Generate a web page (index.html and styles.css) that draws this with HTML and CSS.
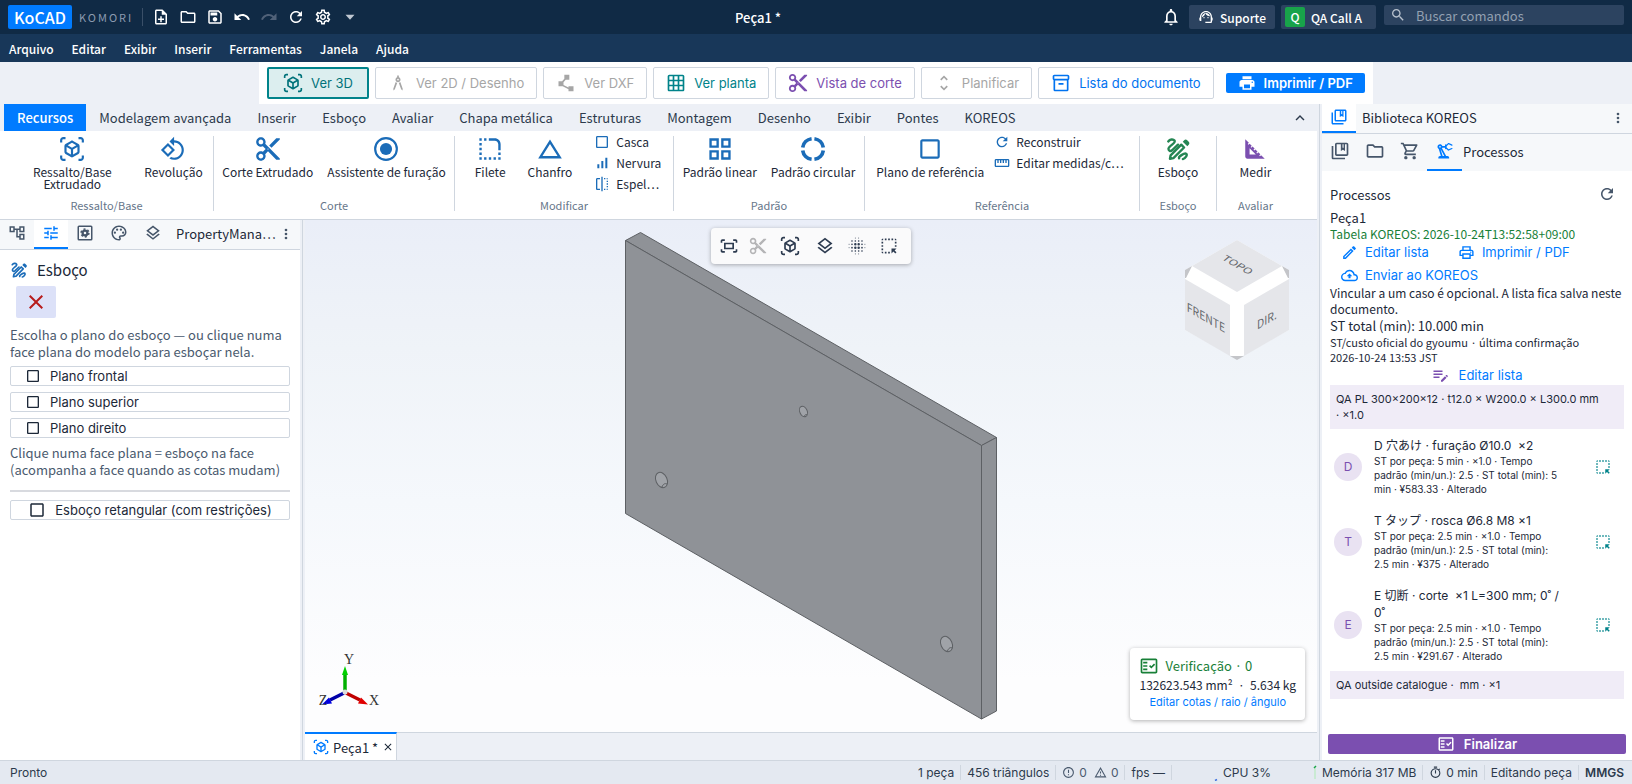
FILE: index.html
```html
<!DOCTYPE html>
<html lang="pt-BR">
<head>
<meta charset="utf-8">
<meta name="viewport" content="width=device-width, initial-scale=1">
<title>KoCAD</title>
<link rel="stylesheet" href="styles.css">
</head>
<body>
<svg class="sprite" aria-hidden="true">
  <symbol id="note-add" viewBox="0 0 24 24"><path d="M13 11h-2v3H8v2h3v3h2v-3h3v-2h-3zm1-9H6c-1.1 0-2 .9-2 2v16c0 1.1.89 2 1.99 2H18c1.1 0 2-.9 2-2V8l-6-6zm4 18H6V4h7v5h5v11z"/></symbol>
  <symbol id="folder" viewBox="0 0 24 24"><path d="M9.17 6l2 2H20v10H4V6h5.17M10 4H4c-1.1 0-1.99.9-1.99 2L2 18c0 1.1.9 2 2 2h16c1.1 0 2-.9 2-2V8c0-1.1-.9-2-2-2h-8l-2-2z"/></symbol>
  <symbol id="save" viewBox="0 0 24 24"><path d="M17 3H5c-1.11 0-2 .9-2 2v14c0 1.1.89 2 2 2h14c1.1 0 2-.9 2-2V7l-4-4zm2 16H5V5h11.17L19 7.83V19zm-7-7c-1.66 0-3 1.34-3 3s1.34 3 3 3 3-1.34 3-3-1.34-3-3-3zM6 6h9v4H6z"/></symbol>
  <symbol id="undo" viewBox="0 0 24 24"><path d="M12.5 8c-2.65 0-5.05.99-6.9 2.6L2 7v9h9l-3.62-3.62c1.39-1.16 3.16-1.88 5.12-1.88 3.54 0 6.55 2.31 7.6 5.5l2.37-.78C21.08 11.03 17.15 8 12.5 8z"/></symbol>
  <symbol id="redo" viewBox="0 0 24 24"><path d="M18.4 10.6C16.55 8.99 14.15 8 11.5 8c-4.65 0-8.58 3.03-9.96 7.22L3.9 16c1.05-3.19 4.05-5.5 7.6-5.5 1.95 0 3.73.72 5.12 1.88L13 16h9V7l-3.6 3.6z"/></symbol>
  <symbol id="refresh" viewBox="0 0 24 24"><path d="M17.65 6.35C16.2 4.9 14.21 4 12 4c-4.42 0-7.99 3.58-7.99 8s3.57 8 7.99 8c3.73 0 6.84-2.55 7.73-6h-2.08c-.82 2.33-3.04 4-5.65 4-3.31 0-6-2.69-6-6s2.69-6 6-6c1.66 0 3.14.69 4.22 1.78L13 11h7V4l-2.35 2.35z"/></symbol>
  <symbol id="settings" viewBox="0 0 24 24"><path d="M19.43 12.98c.04-.32.07-.64.07-.98 0-.34-.03-.66-.07-.98l2.11-1.65c.19-.15.24-.42.12-.64l-2-3.46c-.09-.16-.26-.25-.44-.25-.06 0-.12.01-.17.03l-2.49 1c-.52-.4-1.08-.73-1.69-.98l-.38-2.65C14.46 2.18 14.25 2 14 2h-4c-.25 0-.46.18-.49.42l-.38 2.65c-.61.25-1.17.59-1.69.98l-2.49-1c-.06-.02-.12-.03-.18-.03-.17 0-.34.09-.43.25l-2 3.46c-.13.22-.07.49.12.64l2.11 1.65c-.04.32-.07.65-.07.98 0 .33.03.66.07.98l-2.11 1.65c-.19.15-.24.42-.12.64l2 3.46c.09.16.26.25.44.25.06 0 .12-.01.17-.03l2.49-1c.52.4 1.08.73 1.69.98l.38 2.65c.03.24.24.42.49.42h4c.25 0 .46-.18.49-.42l.38-2.65c.61-.25 1.17-.59 1.69-.98l2.49 1c.06.02.12.03.18.03.17 0 .34-.09.43-.25l2-3.46c.12-.22.07-.49-.12-.64l-2.11-1.65zm-1.98-1.71c.04.31.05.52.05.73 0 .21-.02.43-.05.73l-.14 1.13.89.7 1.08.84-.7 1.21-1.27-.51-1.04-.42-.9.68c-.43.32-.84.56-1.25.73l-1.06.43-.16 1.13-.2 1.35h-1.4l-.19-1.35-.16-1.13-1.06-.43c-.43-.18-.83-.41-1.23-.71l-.91-.7-1.06.43-1.27.51-.7-1.21 1.08-.84.89-.7-.14-1.13c-.03-.31-.05-.54-.05-.74s.02-.43.05-.73l.14-1.13-.89-.7-1.08-.84.7-1.21 1.27.51 1.04.42.9-.68c.43-.32.84-.56 1.25-.73l1.06-.43.16-1.13.2-1.35h1.39l.19 1.35.16 1.13 1.06.43c.43.18.83.41 1.23.71l.91.7 1.06-.43 1.27-.51.7 1.21-1.07.85-.89.7.14 1.13zM12 8c-2.21 0-4 1.79-4 4s1.79 4 4 4 4-1.79 4-4-1.79-4-4-4zm0 6c-1.1 0-2-.9-2-2s.9-2 2-2 2 .9 2 2-.9 2-2 2z"/></symbol>
  <symbol id="caret" viewBox="0 0 24 24"><path d="M6 9l6 6.500 6-6.500z"/></symbol>
  <symbol id="bell" viewBox="0 0 24 24"><path d="M12 22c1.100 0 2-.9 2-2h-4c0 1.100.9 2 2 2zm6-6v-5c0-3.070-1.630-5.640-4.500-6.320V4c0-.83-.67-1.500-1.500-1.500s-1.500.67-1.500 1.500v.68C7.640 5.360 6 7.920 6 11v5l-2 2v1h16v-1l-2-2zm-2 1H8v-6c0-2.480 1.510-4.500 4-4.500s4 2.020 4 4.500v6z"/></symbol>
  <symbol id="support" viewBox="0 0 24 24"><path d="M21 12.22C21 6.73 16.74 3 12 3c-4.690 0-9 3.650-9 9.280-.6.34-1 .98-1 1.720v2c0 1.100.9 2 2 2h1v-6.100c0-3.870 3.130-7 7-7s7 3.130 7 7V19h-8v2h8c1.100 0 2-.9 2-2v-1.220c.59-.31 1-.92 1-1.640v-2.300c0-.7-.41-1.310-1-1.620z"/><circle cx="9" cy="13" r="1"/><circle cx="15" cy="13" r="1"/><path d="M18 11.030C17.520 8.180 15.040 6 12.050 6c-3.030 0-6.290 2.510-6.030 6.450 2.470-1.010 4.330-3.210 4.860-5.890 1.310 2.630 4 4.440 7.120 4.470z"/></symbol>
  <symbol id="search" viewBox="0 0 24 24"><path d="M15.5 14h-.79l-.28-.27C15.410 12.590 16 11.110 16 9.500 16 5.910 13.090 3 9.500 3S3 5.910 3 9.500 5.910 16 9.500 16c1.610 0 3.090-.59 4.230-1.570l.27.28v.79l5 4.990L20.490 19l-4.990-5zm-6 0C7.010 14 5 11.990 5 9.500S7.010 5 9.500 5 14 7.010 14 9.500 11.990 14 9.500 14z"/></symbol>
  <symbol id="cube" viewBox="0 0 24 24"><path d="M3 4c0-.55.45-1 1-1h2V1H4C2.340 1 1 2.340 1 4v2h2V4zM3 20v-2H1v2c0 1.660 1.340 3 3 3h2v-2H4c-.55 0-1-.45-1-1zM20 1h-2v2h2c.55 0 1 .45 1 1v2h2V4c0-1.660-1.340-3-3-3zM21 20c0 .55-.45 1-1 1h-2v2h2c1.660 0 3-1.340 3-3v-2h-2v2zM19 14.870V9.130c0-.72-.38-1.380-1-1.730l-5-2.880c-.31-.18-.65-.27-1-.27s-.69.09-1 .27L6 7.390c-.62.36-1 1.020-1 1.740v5.740c0 .72.38 1.380 1 1.730l5 2.880c.31.18.65.27 1 .27s.69-.09 1-.27l5-2.880c.62-.35 1-1.010 1-1.730zm-8 2.300-4-2.300v-4.630l4 2.330v4.600zm1-6.330L8.040 8.530 12 6.250l3.960 2.280L12 10.840zm5 4.030-4 2.300v-4.600l4-2.330v4.630z"/></symbol>
  <symbol id="compass" viewBox="0 0 24 24"><path d="M6.360 18.780 6.610 21l1.620-1.540 2.770-7.600c-.68-.17-1.280-.51-1.770-.98l-2.870 7.900zM14.770 10.880c-.49.47-1.100.81-1.770.98l2.770 7.600L17.390 21l.25-2.220-2.870-7.900zM15 8c0-1.300-.84-2.400-2-2.820V3h-2v2.180C9.840 5.600 9 6.700 9 8c0 1.660 1.340 3 3 3s3-1.340 3-3zm-3 1c-.55 0-1-.45-1-1s.45-1 1-1 1 .45 1 1-.45 1-1 1z"/></symbol>
  <symbol id="polyline" viewBox="0 0 24 24"><path d="M15 16v1.260l-6-3v-3.170L11.700 8H16V2h-6v4.900L7.300 10H3v6h5l7 3.500V22h6v-6h-6z"/></symbol>
  <symbol id="grid" viewBox="0 0 24 24"><path d="M20 2H4c-1.100 0-2 .9-2 2v16c0 1.100.9 2 2 2h16c1.100 0 2-.9 2-2V4c0-1.100-.9-2-2-2zM8 20H4v-4h4v4zm0-6H4v-4h4v4zm0-6H4V4h4v4zm6 12h-4v-4h4v4zm0-6h-4v-4h4v4zm0-6h-4V4h4v4zm6 12h-4v-4h4v4zm0-6h-4v-4h4v4zm0-6h-4V4h4v4z"/></symbol>
  <symbol id="cut" viewBox="1 1 22 22"><path d="M9.640 7.640c.23-.5.36-1.050.36-1.640 0-2.210-1.790-4-4-4S2 3.790 2 6s1.790 4 4 4c.59 0 1.140-.13 1.640-.36L10 12l-2.360 2.360C7.140 14.130 6.590 14 6 14c-2.210 0-4 1.790-4 4s1.790 4 4 4 4-1.790 4-4c0-.59-.13-1.140-.36-1.640L12 14l7 7h3v-1L9.640 7.640zM6 8c-1.100 0-2-.89-2-2s.9-2 2-2 2 .89 2 2-.9 2-2 2zm0 12c-1.100 0-2-.89-2-2s.9-2 2-2 2 .89 2 2-.9 2-2 2zm6-7.500c-.28 0-.5-.22-.5-.5s.22-.5.5-.5.5.22.5.5-.22.5-.5.5zM19 3l-6 6 2 2 7-7V3z"/></symbol>
  <symbol id="unfold" viewBox="0 0 24 24"><path d="M12 5.830 15.170 9l1.410-1.410L12 3 7.410 7.590 8.830 9 12 5.830zm0 12.340L8.830 15l-1.410 1.410L12 21l4.590-4.590L15.170 15 12 18.170z"/></symbol>
  <symbol id="archive" viewBox="0 0 24 24"><path d="M20 2H4c-1 0-2 .9-2 2v3.010c0 .72.43 1.340 1 1.690V20c0 1.100 1.100 2 2 2h14c.9 0 2-.9 2-2V8.700c.57-.35 1-.97 1-1.690V4c0-1.100-1-2-2-2zm-1 18H5V9h14v11zm1-13H4V4h16v3zM9 12h6v2H9z"/></symbol>
  <symbol id="print-fill" viewBox="0 0 24 24"><path d="M19 8H5c-1.660 0-3 1.340-3 3v6h4v4h12v-4h4v-6c0-1.660-1.340-3-3-3zm-3 11H8v-5h8v5zm3-7c-.55 0-1-.45-1-1s.45-1 1-1 1 .45 1 1-.45 1-1 1zm-1-9H6v4h12V3z"/></symbol>
  <symbol id="print" viewBox="0 0 24 24"><path d="M19 8h-1V3H6v5H5c-1.660 0-3 1.340-3 3v6h4v4h12v-4h4v-6c0-1.660-1.340-3-3-3zM8 5h8v3H8V5zm8 12v2H8v-4h8v2zm2-2v-2H6v2H4v-4c0-.55.45-1 1-1h14c.55 0 1 .45 1 1v4h-2z"/><circle cx="18" cy="11.5" r="1"/></symbol>
  <symbol id="revolve" viewBox="0 0 24 24"><path d="M7.340 6.410.86 12.900l6.490 6.480 6.490-6.480-6.500-6.490zM3.690 12.900l3.660-3.660L11 12.900l-3.660 3.660-3.650-3.660zm15.670-6.260C17.610 4.880 15.300 4 13 4V.76L8.760 5 13 9.240V6c1.790 0 3.580.68 4.950 2.050 2.730 2.730 2.730 7.170 0 9.900C16.580 19.320 14.790 20 13 20c-.97 0-1.940-.21-2.840-.61l-1.490 1.490C10.020 21.620 11.510 22 13 22c2.300 0 4.610-.88 6.360-2.640 3.520-3.510 3.520-9.210 0-12.720z"/></symbol>
  <symbol id="target" viewBox="0 0 24 24"><circle cx="12" cy="12" r="10" fill="none" stroke="currentColor" stroke-width="2"/><circle cx="12" cy="12" r="5.600"/></symbol>
  <symbol id="fillet" viewBox="1 1 22 22"><path d="M19 19h2v2h-2v-2zm0-2h2v-2h-2v2zM3 13h2v-2H3v2zm0 4h2v-2H3v2zm0-8h2V7H3v2zm0-4h2V3H3v2zm4 0h2V3H7v2zm8 16h2v-2h-2v2zm-4 0h2v-2h-2v2zm-4 0h2v-2H7v2zm-4 0h2v-2H3v2zM21 8c0-2.760-2.240-5-5-5h-5v2h5c1.650 0 3 1.350 3 3v5h2V8z"/></symbol>
  <symbol id="triangle" viewBox="1 1 22 22"><path d="M12 7.770 18.390 18H5.610L12 7.770M12 4 2 20h20L12 4z"/></symbol>
  <symbol id="square" viewBox="0 0 24 24"><path d="M19 3H5c-1.100 0-2 .9-2 2v14c0 1.100.9 2 2 2h14c1.100 0 2-.9 2-2V5c0-1.100-.9-2-2-2zm0 16H5V5h14v14z"/></symbol>
  <symbol id="bars" viewBox="0 0 24 24"><path d="M17 4h3v16h-3zM5 14h3v6H5zm6-5h3v11h-3z"/></symbol>
  <symbol id="mirror" viewBox="0 0 24 24"><path d="M15 21h2v-2h-2v2zm4-12h2V7h-2v2zM3 5v14c0 1.100.9 2 2 2h4v-2H5V5h4V3H5c-1.100 0-2 .9-2 2zm16-2v2h2c0-1.100-.9-2-2-2zm-8 20h2V1h-2v22zm8-6h2v-2h-2v2zM15 5h2V3h-2v2zm4 8h2v-2h-2v2zm0 8c1.100 0 2-.9 2-2h-2v2z"/></symbol>
  <symbol id="quad" viewBox="1 1 22 22"><path d="M3 3v8h8V3H3zm6 6H5V5h4v4zm-6 4v8h8v-8H3zm6 6H5v-4h4v4zm4-16v8h8V3h-8zm6 6h-4V5h4v4zm-6 4v8h8v-8h-8zm6 6h-4v-4h4v4z"/></symbol>
  <symbol id="ring" viewBox="0 0 24 24"><g fill="none" stroke="currentColor" stroke-width="3.400"><path d="M13.300 2.500A9.600 9.600 0 0 1 21.500 10.700M21.500 13.300A9.600 9.600 0 0 1 13.300 21.500M10.700 21.500A9.600 9.600 0 0 1 2.500 13.300M2.500 10.700A9.600 9.600 0 0 1 10.700 2.500"/></g></symbol>
  <symbol id="ruler" viewBox="0 0 24 24"><path d="M21 6H3c-1.100 0-2 .9-2 2v8c0 1.100.9 2 2 2h18c1.100 0 2-.9 2-2V8c0-1.100-.9-2-2-2zm0 10H3V8h2v4h2V8h2v4h2V8h2v4h2V8h2v4h2V8h2v8z"/></symbol>
  <symbol id="sketch" viewBox="0 0 24 24"><g fill="none" stroke="currentColor" stroke-width="2.200" stroke-linecap="round" stroke-linejoin="round"><path d="M3 5C4.500 3 7.500 2.600 8.800 4.200C10.600 6.600 3 9.200 3.200 12C3.300 13.600 5 14.400 6.500 13.200L12 8"/><path d="M5.200 17.800 15 8 17.600 10.600 7.800 20.400 4.600 21z"/><path d="M13 20.600C12 19 17.800 15.800 19.200 16.200C21.500 17 18.800 20.800 16.500 21.300"/></g><path d="M16.400 5.200l1.300-1.300c.8-.8 2-.8 2.800 0l1.400 1.400c.8.8.8 2 0 2.800l-1.300 1.300z"/></symbol>
  <symbol id="set-square" viewBox="0 0 24 24"><path d="M17.660 17.660l-1.060 1.060-.71-.71 1.060-1.060-1.940-1.940-1.060 1.060-.71-.71 1.060-1.060-1.940-1.940-1.060 1.060-.71-.71 1.060-1.060L9.700 9.700l-1.060 1.060-.71-.71 1.060-1.060-1.940-1.940-1.060 1.060-.71-.71 1.060-1.060L3 3v16c0 1.100.9 2 2 2h16l-3.340-3.340zM7 17v-5.760L12.760 17H7z"/></symbol>
  <symbol id="library" viewBox="0 0 24 24"><path d="M4 6H2v14c0 1.100.9 2 2 2h14v-2H4V6z"/><path d="M20 2H8c-1.100 0-2 .9-2 2v12c0 1.100.9 2 2 2h12c1.100 0 2-.9 2-2V4c0-1.100-.9-2-2-2zm0 14H8V4h5v8l2.500-1.500L18 12V4h2v12zM15 4h1.300v4.400l-.8-.5-.5.4z" fill-rule="evenodd"/></symbol>
  <symbol id="cart" viewBox="0 0 24 24"><path d="M15.550 13c.75 0 1.410-.41 1.750-1.030l3.580-6.490c.37-.66-.11-1.480-.87-1.480H5.210l-.94-2H1v2h2l3.600 7.590-1.350 2.440C4.520 15.370 5.480 17 7 17h12v-2H7l1.100-2h7.450zM6.160 6h12.150l-2.760 5H8.530L6.160 6zM7 18c-1.100 0-1.990.9-1.990 2S5.900 22 7 22s2-.9 2-2-.9-2-2-2zm10 0c-1.100 0-1.990.9-1.990 2s.89 2 1.990 2 2-.9 2-2-.9-2-2-2z"/></symbol>
  <symbol id="robot" viewBox="0 0 24 24"><path d="M19.930 8.350l-3.600 1.680L14 7.700V6.300l2.330-2.330 3.600 1.680c.38.18.82.01 1-.36.18-.38.01-.82-.36-1l-3.920-1.830c-.38-.18-.83-.1-1.130.2L13.780 4.400c-.18-.24-.46-.4-.78-.4-.55 0-1 .45-1 1v1H8.820C8.400 4.840 7.300 4 6 4 4.340 4 3 5.340 3 7c0 1.100.6 2.050 1.480 2.580L7.080 18H6c-1.100 0-2 .9-2 2v1h13v-1c0-1.100-.9-2-2-2h-1.620L8.410 8.770c.17-.24.31-.49.41-.77H12v1c0 .55.45 1 1 1 .32 0 .6-.16.78-.4l1.740 1.740c.3.3.75.38 1.130.2l3.920-1.830c.38-.18.54-.62.36-1-.18-.37-.62-.54-1-.36zM6 8c-.55 0-1-.45-1-1s.45-1 1-1 1 .45 1 1-.45 1-1 1zm5.110 10H9.170l-2.460-8h.1l4.300 8z"/></symbol>
  <symbol id="tree" viewBox="0 0 24 24"><path d="M22 11V3h-7v3H9V3H2v8h7V8h2v10h4v3h7v-8h-7v3h-2V8h2v3h7zM7 9H4V5h3v4zm10 6h3v4h-3v-4zm0-10h3v4h-3V5z"/></symbol>
  <symbol id="tune" viewBox="0 0 24 24"><path d="M3 17v2h6v-2H3zM3 5v2h10V5H3zm10 16v-2h8v-2h-8v-2h-2v6h2zM7 9v2H3v2h4v2h2V9H7zm14 4v-2H11v2h10zm-6-4h2V7h4V5h-4V3h-2v6z"/></symbol>
  <symbol id="config" viewBox="0 0 24 24"><rect x="3" y="3" width="18" height="18" rx="1" fill="none" stroke="currentColor" stroke-width="2"/><circle cx="12" cy="12" r="3.200" fill="none" stroke="currentColor" stroke-width="3"/><circle cx="12" cy="12" r="5.200" fill="none" stroke="currentColor" stroke-width="2" stroke-dasharray="2.700 2.745"/></symbol>
  <symbol id="palette" viewBox="0 0 24 24"><path d="M12 22C6.490 22 2 17.510 2 12S6.490 2 12 2s10 4.040 10 9c0 3.310-2.690 6-6 6h-1.770c-.28 0-.5.22-.5.5 0 .12.05.23.13.33.41.47.64 1.060.64 1.670 0 1.380-1.120 2.500-2.500 2.500zm0-18c-4.410 0-8 3.590-8 8s3.590 8 8 8c.28 0 .5-.22.5-.5 0-.16-.08-.28-.14-.35-.41-.46-.63-1.050-.63-1.650 0-1.380 1.120-2.500 2.500-2.500H16c2.210 0 4-1.790 4-4 0-3.860-3.590-7-8-7z"/><circle cx="6.500" cy="11.500" r="1.500"/><circle cx="9.500" cy="7.500" r="1.500"/><circle cx="14.500" cy="7.500" r="1.500"/><circle cx="17.500" cy="11.500" r="1.500"/></symbol>
  <symbol id="layers" viewBox="0 0 24 24"><path d="M11.990 18.540l-7.370-5.730L3 14.070l9 7 9-7-1.630-1.270zM12 16l7.360-5.730L21 9l-9-7-9 7 1.630 1.270L12 16zm0-11.470L17.740 9 12 13.470 6.260 9 12 4.530z"/></symbol>
  <symbol id="more" viewBox="0 0 24 24"><circle cx="12" cy="6" r="2"/><circle cx="12" cy="12" r="2"/><circle cx="12" cy="18" r="2"/></symbol>
  <symbol id="up" viewBox="0 0 24 24"><path d="M12 8l-6 6 1.410 1.410L12 10.830l4.590 4.580L18 14z"/></symbol>
  <symbol id="close" viewBox="0 0 24 24"><path d="M19 6.410L17.590 5 12 10.590 6.410 5 5 6.410 10.590 12 5 17.590 6.410 19 12 13.410 17.590 19 19 17.590 13.410 12z"/></symbol>
  <symbol id="edit" viewBox="0 0 24 24"><path d="M14.060 9.020l.92.92L5.920 19H5v-.92l9.060-9.060M17.660 3c-.25 0-.51.1-.7.29l-1.830 1.830 3.750 3.750 1.830-1.830c.39-.39.39-1.020 0-1.410l-2.340-2.340c-.2-.2-.45-.29-.71-.29zm-3.600 3.190L3 17.250V21h3.750L17.810 9.940l-3.750-3.750z"/></symbol>
  <symbol id="cloud-up" viewBox="0 0 24 24"><path d="M19.350 10.040C18.670 6.590 15.640 4 12 4 9.110 4 6.600 5.640 5.350 8.040 2.340 8.360 0 10.910 0 14c0 3.310 2.690 6 6 6h13c2.760 0 5-2.240 5-5 0-2.640-2.050-4.780-4.650-4.960zM19 18H6c-2.210 0-4-1.790-4-4 0-2.050 1.530-3.760 3.560-3.970l1.070-.11.5-.95C8.080 7.140 9.940 6 12 6c2.620 0 4.880 1.860 5.390 4.430l.3 1.500 1.530.11c1.560.1 2.780 1.410 2.780 2.960 0 1.650-1.350 3-3 3zM8 13h2.550v3h2.900v-3H16l-4-4z"/></symbol>
  <symbol id="edit-note" viewBox="0 0 24 24"><path d="M2 10h12v2H2v-2zm0-2h12V6H2v2zm0 8h8v-2H2v2zm16.010-3.130.71-.71c.39-.39 1.020-.39 1.410 0l.71.71c.39.39.39 1.020 0 1.410l-.71.71-2.120-2.120zm-.71.71-5.300 5.300V21h2.120l5.300-5.300-2.120-2.120z"/></symbol>
  <symbol id="fact-check" viewBox="0 0 24 24"><path d="M20 3H4c-1.100 0-2 .9-2 2v14c0 1.100.9 2 2 2h16c1.100 0 2-.9 2-2V5c0-1.100-.9-2-2-2zm0 16H4V5h16v14z"/><path d="M19.410 10.420 17.990 9l-3.170 3.170-1.410-1.420L12 12.160 14.820 15zM5 7h5v2H5zm0 4h5v2H5zm0 4h5v2H5z"/></symbol>
  <symbol id="pick" viewBox="0 0 24 24"><path d="M17 5h-2V3h2v2zm-2 10v6l2.290-2.290L19.590 21 21 19.590l-2.290-2.290L21 15h-6zm4-6h2V7h-2v2zm0 4h2v-2h-2v2zm-8 8h2v-2h-2v2zM7 5h2V3H7v2zM3 17h2v-2H3v2zm2 4v-2H3c0 1.100.9 2 2 2zM19 3v2h2c0-1.100-.9-2-2-2zm-8 2h2V3h-2v2zM3 9h2V7H3v2zm4 12h2v-2H7v2zm-4-8h2v-2H3v2zm0-8h2V3c-1.100 0-2 .9-2 2z"/></symbol>
  <symbol id="timer" viewBox="0 0 24 24"><path d="M15 1H9v2h6V1zm-4 13h2V8h-2v6zm8.030-6.610 1.420-1.420c-.43-.51-.9-.99-1.410-1.410l-1.420 1.420C16.070 4.740 14.120 4 12 4c-4.970 0-9 4.030-9 9s4.020 9 9 9 9-4.030 9-9c0-2.120-.74-4.070-1.970-5.610zM12 20c-3.870 0-7-3.130-7-7s3.130-7 7-7 7 3.130 7 7-3.130 7-7 7z"/></symbol>
  <symbol id="error" viewBox="0 0 24 24"><path d="M11 15h2v2h-2v-2zm0-8h2v6h-2V7zm.99-5C6.470 2 2 6.480 2 12s4.470 10 9.990 10C17.520 22 22 17.520 22 12S17.520 2 11.990 2zM12 20c-4.420 0-8-3.580-8-8s3.580-8 8-8 8 3.580 8 8-3.580 8-8 8z"/></symbol>
  <symbol id="warning" viewBox="0 0 24 24"><path d="M12 5.990 19.530 19H4.470L12 5.990M12 2 1 21h22L12 2zm1 14h-2v2h2v-2zm0-6h-2v4h2v-4z"/></symbol>
  <symbol id="fit" viewBox="0 0 24 24"><path d="M17 4h3c1.100 0 2 .9 2 2v2h-2V6h-3V4zM4 8V6h3V4H4c-1.100 0-2 .9-2 2v2h2zm16 8v2h-3v2h3c1.100 0 2-.9 2-2v-2h-2zM7 18H4v-2H2v2c0 1.100.9 2 2 2h3v-2zM18 8H6v8h12V8zm-2 6H8v-4h8v4z"/></symbol>
  <symbol id="blur" viewBox="0 0 24 24"><g fill="none" stroke="currentColor" stroke-linecap="round"><path stroke-width="3" d="M10 10v0M14 10v0M10 14v0M14 14v0"/><path stroke-width="2" d="M6 6v0M10 6v0M14 6v0M18 6v0M6 10v0M18 10v0M6 14v0M18 14v0M6 18v0M10 18v0M14 18v0M18 18v0"/><path stroke-width="1" d="M10 2.500v0M14 2.500v0M10 21.500v0M14 21.500v0M2.500 10v0M2.500 14v0M21.500 10v0M21.500 14v0"/></g></symbol>
</svg>

<header class="titlebar">
  <span class="brand">KoCAD</span>
  <span class="company">KOMORI</span>
  <div class="quick">
    <button aria-label="Novo"><svg><use href="#note-add"/></svg></button>
    <button aria-label="Abrir"><svg><use href="#folder"/></svg></button>
    <button aria-label="Salvar"><svg><use href="#save"/></svg></button>
    <button aria-label="Desfazer"><svg><use href="#undo"/></svg></button>
    <button aria-label="Refazer" disabled><svg><use href="#redo"/></svg></button>
    <button aria-label="Reconstruir"><svg><use href="#refresh"/></svg></button>
    <button aria-label="Opções"><svg><use href="#settings"/></svg></button>
    <button class="quick-more" aria-label="Mais"><svg><use href="#caret"/></svg></button>
  </div>
  <h1 class="doc-title">Peça1 *</h1>
  <button class="bell" aria-label="Notificações"><svg><use href="#bell"/></svg></button>
  <button class="chip"><svg><use href="#support"/></svg>Suporte</button>
  <button class="chip user"><span class="initial">Q</span>QA Call A</button>
  <label class="search"><svg><use href="#search"/></svg><input type="text" placeholder="Buscar comandos" aria-label="Buscar comandos"></label>
</header>

<nav class="menubar">
  <button>Arquivo</button><button>Editar</button><button>Exibir</button><button>Inserir</button><button>Ferramentas</button><button>Janela</button><button>Ajuda</button>
</nav>

<div class="viewrow">
  <div class="views">
    <button class="view active"><svg><use href="#cube"/></svg>Ver 3D</button>
    <button class="view" disabled><svg><use href="#compass"/></svg>Ver 2D / Desenho</button>
    <button class="view" disabled><svg><use href="#polyline"/></svg>Ver DXF</button>
    <button class="view teal"><svg><use href="#grid"/></svg>Ver planta</button>
    <button class="view purple"><svg><use href="#cut"/></svg>Vista de corte</button>
    <button class="view" disabled><svg><use href="#unfold"/></svg>Planificar</button>
    <button class="view blue"><svg><use href="#archive"/></svg>Lista do documento</button>
    <button class="print"><svg><use href="#print-fill"/></svg>Imprimir / PDF</button>
  </div>
</div>

<div class="body">
  <div class="center">
    <div class="ribbon-tabs">
      <button class="active">Recursos</button><button>Modelagem avançada</button><button>Inserir</button><button>Esboço</button><button>Avaliar</button><button>Chapa metálica</button><button>Estruturas</button><button>Montagem</button><button>Desenho</button><button>Exibir</button><button>Pontes</button><button>KOREOS</button>
      <button class="collapse" aria-label="Recolher"><svg><use href="#up"/></svg></button>
    </div>
    <div class="ribbon">
      <section class="group g-boss">
        <div class="tools">
          <button class="tool wide"><svg><use href="#cube"/></svg>Ressalto/Base Extrudado</button>
          <button class="tool"><svg><use href="#revolve"/></svg>Revolução</button>
        </div>
        <h2>Ressalto/Base</h2>
      </section>
      <section class="group g-cut">
        <div class="tools">
          <button class="tool"><svg><use href="#cut"/></svg>Corte Extrudado</button>
          <button class="tool"><svg><use href="#target"/></svg>Assistente de furação</button>
        </div>
        <h2>Corte</h2>
      </section>
      <section class="group g-modify">
        <div class="tools">
          <button class="tool"><svg><use href="#fillet"/></svg>Filete</button>
          <button class="tool"><svg><use href="#triangle"/></svg>Chanfro</button>
          <div class="stack">
            <button><svg><use href="#square"/></svg>Casca</button>
            <button><svg><use href="#bars"/></svg>Nervura</button>
            <button><svg><use href="#mirror"/></svg>Espel⋯</button>
          </div>
        </div>
        <h2>Modificar</h2>
      </section>
      <section class="group g-pattern">
        <div class="tools">
          <button class="tool"><svg><use href="#quad"/></svg>Padrão linear</button>
          <button class="tool"><svg><use href="#ring"/></svg>Padrão circular</button>
        </div>
        <h2>Padrão</h2>
      </section>
      <section class="group g-ref">
        <div class="tools">
          <button class="tool"><svg><use href="#square"/></svg>Plano de referência</button>
          <div class="stack">
            <button><svg><use href="#refresh"/></svg>Reconstruir</button>
            <button><svg><use href="#ruler"/></svg>Editar medidas/c⋯</button>
          </div>
        </div>
        <h2>Referência</h2>
      </section>
      <section class="group g-sketch">
        <div class="tools"><button class="tool green"><svg><use href="#sketch"/></svg>Esboço</button></div>
        <h2>Esboço</h2>
      </section>
      <section class="group g-measure">
        <div class="tools"><button class="tool violet"><svg><use href="#set-square"/></svg>Medir</button></div>
        <h2>Avaliar</h2>
      </section>
    </div>

    <div class="workspace">
      <aside class="left">
        <div class="panel-tabs">
          <button aria-label="Árvore"><svg><use href="#tree"/></svg></button>
          <button class="active" aria-label="Propriedades"><svg><use href="#tune"/></svg></button>
          <button aria-label="Configurações"><svg><use href="#config"/></svg></button>
          <button aria-label="Aparência"><svg><use href="#palette"/></svg></button>
          <button aria-label="Camadas"><svg><use href="#layers"/></svg></button>
          <span class="panel-title">PropertyMana⋯</span>
          <button class="more" aria-label="Mais"><svg><use href="#more"/></svg></button>
        </div>
        <div class="props">
          <h2><svg><use href="#sketch"/></svg>Esboço</h2>
          <button class="cancel" aria-label="Cancelar"><svg><use href="#close"/></svg></button>
          <p>Escolha o plano do esboço — ou clique numa face plana do modelo para esboçar nela.</p>
          <button class="plane"><svg><use href="#square"/></svg>Plano frontal</button>
          <button class="plane"><svg><use href="#square"/></svg>Plano superior</button>
          <button class="plane"><svg><use href="#square"/></svg>Plano direito</button>
          <p>Clique numa face plana = esboço na face (acompanha a face quando as cotas mudam)</p>
          <hr>
          <button class="plane rect"><svg><use href="#square"/></svg>Esboço retangular (com restrições)</button>
        </div>
      </aside>
      <div class="splitter"></div>
      <main class="stage">
        <div class="viewport">
          <svg class="model" viewBox="0 0 1012 512" role="img" aria-label="Placa com três furos">
            <g fill="#8f9297" stroke="#5d6064" stroke-linejoin="round">
              <path d="M320.500 20.500 335.500 12.500 691.500 217.500 676.500 225.500z"/>
              <path d="M676.500 225.500 691.500 217.500V491L676.500 499z"/>
              <path d="M320.500 20.500 676.500 225.500V499L320.500 293.500z"/>
              <g fill="#a0a3a8">
                <ellipse cx="498.500" cy="191.500" rx="3.700" ry="5.500" transform="rotate(-24 498.500 191.500)"/>
                <ellipse cx="356.500" cy="260" rx="5.600" ry="8" transform="rotate(-24 356.500 260)"/>
                <ellipse cx="641.500" cy="424" rx="5.600" ry="8" transform="rotate(-24 641.500 424)"/>
              </g>
              <path fill="none" d="M357 267c1-3 3-4 5-3M642.500 431c1-3 3-4 5-3M499 196.500c1-2 2-2 3-2"/>
            </g>
          </svg>
          <svg class="navcube" viewBox="0 0 104 120" role="img" aria-label="Cubo de vistas">
            <path fill="#fff" d="M52 0 104 30V90L52 119 0 90V30z"/>
            <g fill="#c4c5c9"><path d="M0 30 7 26 1 38H0zM104 30 97 26 103 38H104zM45 116H59L52 120z"/></g>
            <g fill="#e5e6ea"><path d="M52 0 97 26 52 52 7 26z"/><path d="M0 39 45 65V116L0 90z"/><path d="M104 39 59 65V116L104 90z"/></g>
            <g class="face">
              <text transform="matrix(.87 .5 -.6 .5 50 27)">TOPO</text>
              <text transform="matrix(.87 .5 0 1 21 82)">FRENTE</text>
              <text transform="matrix(.87 -.5 0 1 82 84)">DIR.</text>
            </g>
          </svg>
          <svg class="triad" viewBox="0 0 70 60" role="img" aria-label="Eixos">
            <path stroke="#00b000" stroke-width="3.500" d="M30 38V20"/><path fill="#00d000" d="M30 12 33 21H27z"/>
            <path stroke="#c00000" stroke-width="3.500" d="M31 39 45 46"/><path fill="#e00000" d="M53 50.500 43 49.500 46 43.500z"/>
            <path stroke="#0000a8" stroke-width="3.500" d="M29 39 15 46"/><path fill="#0000e0" d="M7 50.500 17 49.500 14 43.500z"/>
            <circle cx="30" cy="38" r="2.500" fill="#ddd"/>
            <g class="axis"><text x="34" y="10">Y</text><text x="59" y="51">X</text><text x="8" y="51">Z</text></g>
          </svg>
          <div class="floatbar">
            <button aria-label="Ajustar"><svg><use href="#fit"/></svg></button>
            <button class="off" aria-label="Seção" disabled><svg><use href="#cut"/></svg></button>
            <button class="orient" aria-label="Orientação"><svg><use href="#cube"/></svg></button>
            <button aria-label="Exibição"><svg><use href="#layers"/></svg></button>
            <button aria-label="Transparência"><svg><use href="#blur"/></svg></button>
            <button aria-label="Selecionar"><svg><use href="#pick"/></svg></button>
          </div>
          <div class="check">
            <div class="check-title"><svg><use href="#fact-check"/></svg>Verificação · 0</div>
            <div>132623.543 mm² &nbsp;·&nbsp; 5.634 kg</div>
            <button>Editar cotas / raio / ângulo</button>
          </div>
        </div>
        <div class="doctabs">
          <div class="doctab"><svg><use href="#cube"/></svg><span>Peça1 *</span><button aria-label="Fechar"><svg><use href="#close"/></svg></button></div>
        </div>
      </main>
    </div>
  </div>
  <div class="splitter"></div>
  <aside class="right">
    <div class="panel-tabs head">
      <button class="active" aria-label="Biblioteca"><svg><use href="#library"/></svg></button>
      <span class="panel-title">Biblioteca KOREOS</span>
      <button class="more" aria-label="Mais"><svg><use href="#more"/></svg></button>
    </div>
    <div class="panel-tabs sub">
      <button aria-label="Biblioteca"><svg><use href="#library"/></svg></button>
      <button aria-label="Pastas"><svg><use href="#folder"/></svg></button>
      <button aria-label="Carrinho"><svg><use href="#cart"/></svg></button>
      <button class="active" aria-label="Processos"><svg><use href="#robot"/></svg></button>
      <span class="sub-title">Processos</span>
    </div>
    <div class="process">
      <div class="process-head"><h2>Processos</h2><button aria-label="Atualizar"><svg><use href="#refresh"/></svg></button></div>
      <div class="part">Peça1</div>
      <div class="table-date">Tabela KOREOS: 2026-10-24T13:52:58+09:00</div>
      <div class="links">
        <button><svg><use href="#edit"/></svg>Editar lista</button>
        <button><svg><use href="#print"/></svg>Imprimir / PDF</button>
        <button><svg><use href="#cloud-up"/></svg>Enviar ao KOREOS</button>
      </div>
      <p class="note">Vincular a um caso é opcional. A lista fica salva neste documento.</p>
      <div class="total">ST total (min): 10.000 min</div>
      <p class="official">ST/custo oficial do gyoumu · última confirmação <time>2026-10-24 13:53 JST</time></p>
      <button class="edit-list"><svg><use href="#edit-note"/></svg>Editar lista</button>
      <div class="band">QA PL 300×200×12 · t12.0 × W200.0 × L300.0 mm ·&nbsp;×1.0</div>
      <ul class="ops">
        <li><span class="avatar">D</span><div class="op"><h3>D 穴あけ · furação Ø10.0 &nbsp;×2</h3><p>ST por peça: 5 min · ×1.0 · Tempo padrão (min/un.): 2.5 · ST total (min): 5 min · ¥583.33 · Alterado</p></div><button aria-label="Destacar"><svg><use href="#pick"/></svg></button></li>
        <li><span class="avatar">T</span><div class="op"><h3>T タップ · rosca Ø6.8 M8 ×1</h3><p>ST por peça: 2.5 min · ×1.0 · Tempo padrão (min/un.): 2.5 · ST total (min): 2.5 min · ¥375 · Alterado</p></div><button aria-label="Destacar"><svg><use href="#pick"/></svg></button></li>
        <li><span class="avatar">E</span><div class="op"><h3>E 切断 · corte &nbsp;×1 L=300 mm; 0˚ / 0˚</h3><p>ST por peça: 2.5 min · ×1.0 · Tempo padrão (min/un.): 2.5 · ST total (min): 2.5 min · ¥291.67 · Alterado</p></div><button aria-label="Destacar"><svg><use href="#pick"/></svg></button></li>
      </ul>
      <div class="band">QA outside catalogue · &nbsp;mm · ×1</div>
      <button class="finish"><svg><use href="#fact-check"/></svg>Finalizar</button>
    </div>
  </aside>
</div>

<footer class="status">
  <span class="ready">Pronto</span>
  <span>1 peça</span>
  <span>456 triângulos</span>
  <span class="issues"><svg><use href="#error"/></svg>0 <svg class="warn"><use href="#warning"/></svg>0</span>
  <span>fps —</span>
  <span class="cpu"><svg class="spark" viewBox="0 0 40 16"><path fill="none" stroke="#3b6fe0" stroke-width="1.500" d="M37 15.500 39 14.500"/></svg>CPU 3%</span>
  <span class="mem"><svg class="spark" viewBox="0 0 40 16"><path fill="#c9ead3" d="M37 3 39 1V14H37z"/><path fill="none" stroke="#1aa34a" stroke-width="1.500" d="M37 3 39 1"/></svg>Memória 317 MB</span>
  <span class="time"><svg><use href="#timer"/></svg>0 min</span>
  <span>Editando peça</span>
  <span class="units">MMGS</span>
</footer>
</body>
</html>
```

FILE: styles.css
```css
* { box-sizing: border-box; }

:root {
  --ink: #1c2838;
  --muted: #4a5a6e;
  --line: #cfd6df;
  --blue: #007bff;
  --tool: #1b6cb8;
  --teal: #00838a;
  --purple: #7b4fb0;
  --pale: #edf0f6;
  --control: Inter, "Noto Sans CJK JP", sans-serif;
}

html, body { height: 100%; }

body {
  margin: 0;
  display: flex;
  flex-direction: column;
  overflow: hidden;
  background: #fff;
  color: var(--ink);
  font: 13px/17px "Noto Sans CJK JP", sans-serif;
}

h1, h2, h3, p, ul { margin: 0; padding: 0; font-size: inherit; font-weight: 400; }

button {
  display: flex;
  align-items: center;
  margin: 0;
  padding: 0;
  border: 0;
  background: none;
  color: inherit;
  font: inherit;
  white-space: nowrap;
}

svg { flex: none; width: 18px; height: 18px; fill: currentColor; }
.sprite { position: absolute; width: 0; height: 0; }

/* Title bar */
.titlebar {
  flex: none;
  display: flex;
  align-items: center;
  height: 34px;
  padding: 0 8px;
  background: #102a45;
  color: #fff;
}
.brand {
  width: 64px;
  height: 24px;
  border-radius: 2px;
  background: var(--blue);
  font-size: 16px;
  font-weight: 500;
  line-height: 24px;
  text-align: center;
}
.company {
  width: 64px;
  padding-left: 7px;
  color: #8d9bb0;
  font-size: 11px;
  letter-spacing: 2px;
}
.quick { display: flex; padding-left: 4px; border-left: 1px solid #3a4f68; margin-left: 6px; }
.quick button { width: 27px; height: 18px; justify-content: center; }
.quick button:disabled { color: #506178; }
.quick .quick-more { color: #c0c8d2; }
.doc-title { flex: 1; padding-right: 8px; font-weight: 500; text-align: center; }
.bell { margin-right: 8px; }
.bell svg { width: 20px; height: 20px; }
.chip {
  height: 24px;
  gap: 6px;
  padding: 0 9px;
  margin-right: 6px;
  border-radius: 2px;
  background: #2c4360;
  font-size: 12px;
  font-weight: 500;
}
.chip svg { width: 16px; height: 16px; }
.chip.user { padding: 0 14px 0 4px; margin-right: 8px; }
.initial {
  width: 20px;
  height: 20px;
  border-radius: 2px;
  background: #18a34a;
  line-height: 20px;
  text-align: center;
}
.search {
  display: flex;
  align-items: center;
  width: 240px;
  height: 20px;
  margin-bottom: 4px;
  padding-left: 6px;
  border-radius: 2px;
  background: #2c4360;
  color: #b8c2ce;
}
.search svg { width: 16px; height: 16px; }
.search input {
  flex: 1;
  min-width: 0;
  height: 20px;
  padding: 0 0 0 10px;
  border: 0;
  background: none;
  color: #fff;
  font: inherit;
}
.search input::placeholder { color: #93a0b1; opacity: 1; }

/* Menu bar */
.menubar { flex: none; display: flex; gap: 18px; height: 28px; padding: 0 9px; background: #183759; color: #fff; font-size: 12px; font-weight: 500; }

/* View switcher */
.viewrow { flex: none; display: flex; justify-content: center; height: 42px; background: var(--pale); font-family: var(--control); }
.views { display: flex; align-items: center; gap: 6px; padding: 0 8px; background: #fff; }
.view {
  height: 32px;
  gap: 8px;
  padding: 0 12px;
  border: 1px solid var(--line);
  border-radius: 2px;
}
.view svg { width: 20px; height: 20px; }
.view:disabled { color: #a6a6a6; }
.view.active { padding: 0 14px; border: 2px solid var(--teal); background: #dceeef; color: #00727a; }
.view.teal { color: var(--teal); }
.view.purple { color: var(--purple); }
.view.blue { color: #0073f0; }
.print {
  height: 20px;
  gap: 8px;
  margin-left: 6px;
  padding: 0 12px;
  border-radius: 2px;
  background: var(--blue);
  color: #fff;
  font-weight: 600;
}

/* Main columns */
.body { flex: 1; min-height: 0; display: flex; }
.center { flex: 1; min-width: 0; display: flex; flex-direction: column; }
.splitter { flex: none; width: 5px; border-left: 2px solid var(--pale); background: linear-gradient(90deg, var(--line) 1px, var(--pale) 1px); }

/* Ribbon */
.ribbon-tabs { flex: none; display: flex; height: 27px; padding: 0 4px; background: var(--pale); color: #2c3a4c; }
.ribbon-tabs button { padding: 0 13px; }
.ribbon-tabs .active { background: var(--blue); color: #fff; font-weight: 500; }
.ribbon-tabs .collapse { margin-left: auto; padding: 0 4px; }
.ribbon { flex: none; display: flex; height: 89px; padding: 5px 0 8px; border-bottom: 1px solid var(--line); }
.group {
  display: flex;
  flex-direction: column;
  align-items: center;
  justify-content: space-between;
  padding: 0 8px;
  border-right: 1px solid var(--line);
  font-size: 12px;
}
.group:last-child { border-right: 0; }
.group h2 { color: #66768a; font-size: 11px; line-height: 12px; }
.tools { display: flex; gap: 14px; width: 100%; justify-content: center; }
.tool { flex-direction: column; align-self: flex-start; gap: 4px; line-height: 12px; }
.tool svg { width: 26px; height: 26px; color: var(--tool); }
.tool.wide { width: 116px; white-space: normal; }
.tool.green svg { color: #258653; }
.tool.violet svg { color: var(--purple); }
.stack { display: flex; flex-direction: column; gap: 5px; margin-top: -2px; }
.stack button { gap: 6px; line-height: 16px; height: 16px; }
.stack svg { width: 16px; height: 16px; color: var(--tool); }
.g-boss { width: 214px; }
.g-boss .tools { padding-left: 4px; }
.g-cut { width: 241px; }
.g-modify { width: 219px; }
.g-modify .tools { gap: 22px; padding-left: 8px; }
.g-pattern { width: 191px; }
.g-ref { width: 275px; }
.g-ref .tools { gap: 10px; padding-right: 4px; }
.g-sketch, .g-measure { width: 77px; }

/* Workspace */
.workspace { flex: 1; min-height: 0; display: flex; }
.left { flex: none; width: 300px; }
.panel-tabs { display: flex; height: 30px; border-bottom: 1px solid var(--line); background: #f6f8fa; }
.panel-tabs button { flex: none; width: 34px; justify-content: center; padding-bottom: 2px; border-bottom: 2px solid transparent; color: #46566a; }
.panel-tabs .active { border-color: var(--blue); background: #fff; color: var(--blue); }
.panel-title { flex: 1; min-width: 0; padding-left: 6px; line-height: 28px; white-space: nowrap; }
.panel-tabs .more { width: 28px; padding-bottom: 0; }
.more svg { width: 16px; height: 16px; }

.props { display: flex; flex-direction: column; gap: 6px; padding: 10px; }
.props h2 { display: flex; align-items: center; gap: 9px; font-size: 15px; line-height: 20px; }
.props h2 svg { color: var(--tool); }
.cancel { width: 40px; height: 32px; margin: 0 6px 2px; justify-content: center; border-radius: 2px; background: #dce1f8; color: #b71c1c; }
.cancel svg { width: 24px; height: 24px; }
.props p { color: var(--muted); }
.plane { height: 20px; gap: 9px; padding-left: 14px; border: 1px solid var(--line); border-radius: 2px; font-family: var(--control); }
.plane svg { width: 16px; height: 16px; }
.plane.rect { justify-content: center; padding: 0; }
.plane.rect svg { width: 18px; height: 18px; }
.props hr { width: 100%; height: 2px; margin: 6px 0 2px; border: 0; background: #d8dadf; }

.stage { flex: 1; min-width: 0; display: flex; flex-direction: column; }
.viewport { position: relative; flex: 1; min-height: 0; background: linear-gradient(#eaeef8, #eff3f8 25%, #f5f8fc 55%, #fdfdfe 90%); }
.model { position: absolute; width: 100%; height: 100%; }
.navcube { position: absolute; top: 20px; right: 28px; width: 104px; height: 120px; }
.face { fill: #66696d; font-size: 12px; text-anchor: middle; }
.triad { position: absolute; left: 10px; bottom: 18px; width: 70px; height: 60px; overflow: visible; }
.axis { fill: #333; font: 14px "Liberation Serif", serif; text-anchor: middle; }
.floatbar {
  position: absolute;
  top: 8px;
  left: 50%;
  display: flex;
  height: 36px;
  padding: 0 6px 0 2px;
  border-radius: 4px;
  background: #fafafb;
  box-shadow: 0 1px 4px rgba(0, 0, 0, .3);
  color: #2d3b50;
  transform: translateX(-50%);
}
.floatbar button { width: 32px; justify-content: center; }
.floatbar svg { width: 20px; height: 20px; }
.floatbar .off { width: 26px; color: #b4b4b6; }
.floatbar .off svg { width: 18px; height: 18px; }
.floatbar .orient { width: 38px; }
.check {
  position: absolute;
  right: 12px;
  bottom: 12px;
  padding: 8px 9px 9px;
  border-radius: 4px;
  background: #fff;
  box-shadow: 0 1px 4px rgba(0, 0, 0, .3);
  font-size: 12px;
}
.check-title { display: flex; align-items: center; gap: 6px; color: #188038; font-size: 13px; line-height: 20px; }
.check-title svg { width: 20px; height: 20px; }
.check button { margin: 1px auto 0; color: var(--blue); font-family: var(--control); font-size: 11px; }

.doctabs { flex: none; display: flex; height: 28px; border-top: 1px solid var(--line); background: var(--pale); }
.doctab { display: flex; align-items: center; gap: 4px; min-width: 90px; margin-top: -1px; padding: 0 2px 0 8px; border-top: 2px solid var(--blue); border-right: 1px solid var(--line); background: #fff; }
.doctab > svg { width: 16px; height: 16px; color: var(--blue); }
.doctab button { margin-left: auto; }
.doctab button svg { width: 12px; height: 12px; }

/* Right panel */
.right { flex: none; display: flex; flex-direction: column; width: 310px; }
.right .panel-tabs .more { margin-left: auto; }
.panel-tabs.sub { flex: none; height: 37px; border-bottom: 0; }
.panel-tabs.sub button { width: 35px; }
.panel-tabs.sub svg { width: 20px; height: 20px; }
.panel-tabs.sub .active { background: none; }
.sub-title { padding-left: 1px; line-height: 36px; }
.process { flex: 1; min-height: 0; display: flex; flex-direction: column; padding: 14px 8px 6px; }
.process-head { display: flex; align-items: center; justify-content: space-between; padding-right: 8px; }
.process-head svg { color: #46566a; }
.part { margin-top: 7px; line-height: 16px; }
.table-date { color: #188038; font-size: 12px; line-height: 16px; }
.links { display: flex; flex-wrap: wrap; gap: 3px 6px; color: var(--blue); font-family: var(--control); }
.links button { height: 20px; gap: 7px; padding: 0 12px 0 11px; }
.links svg { width: 17px; height: 17px; }
.note { font-size: 12px; line-height: 16px; }
.total { line-height: 18px; }
.official { font-size: 11px; line-height: 15px; }
.official time { white-space: nowrap; }
.edit-list { align-self: center; height: 20px; gap: 9px; color: var(--blue); font-family: var(--control); }
.edit-list svg { color: var(--purple); }
.band { padding: 6px; background: #f0ecf7; font-family: var(--control); font-size: 11px; line-height: 16px; }
.ops { list-style: none; font-family: var(--control); }
.ops li { display: flex; align-items: center; padding: 8px 12px 8px 4px; }
.avatar { flex: none; width: 28px; height: 28px; border-radius: 50%; background: #e9e2f2; color: var(--purple); font-size: 12px; line-height: 28px; text-align: center; }
.op { flex: 1; padding: 0 30px 0 12px; }
.op h3 { font-size: 12px; line-height: 17px; }
.op p { font-size: 10px; line-height: 14px; }
.ops svg { color: var(--teal); }
.finish { height: 20px; margin: auto -2px 0; gap: 9px; justify-content: center; border-radius: 2px; background: var(--purple); color: #fff; font-family: var(--control); font-weight: 600; }

/* Status bar */
.status { flex: none; display: flex; align-items: center; height: 24px; padding: 0 2px 0 10px; border-top: 1px solid var(--line); background: #e4e9f1; color: #2c3a4c; font-family: var(--control); font-size: 12px; line-height: 15px; }
.status span { display: flex; align-items: center; padding: 0 6px; border-right: 1px solid var(--line); }
.status svg { width: 13px; height: 13px; }
.status .ready { margin-right: auto; padding-left: 0; border: 0; }
.status .issues { gap: 4px; color: var(--muted); }
.status .warn { margin-left: 3px; }
.status .spark { width: 40px; height: 16px; }
.status .cpu, .status .mem { gap: 5px; border: 0; }
.status .mem { padding-left: 0; }
.status .time { gap: 4px; border-left: 1px solid var(--line); }
.status .units { border-right: 0; font-weight: 600; }
```
